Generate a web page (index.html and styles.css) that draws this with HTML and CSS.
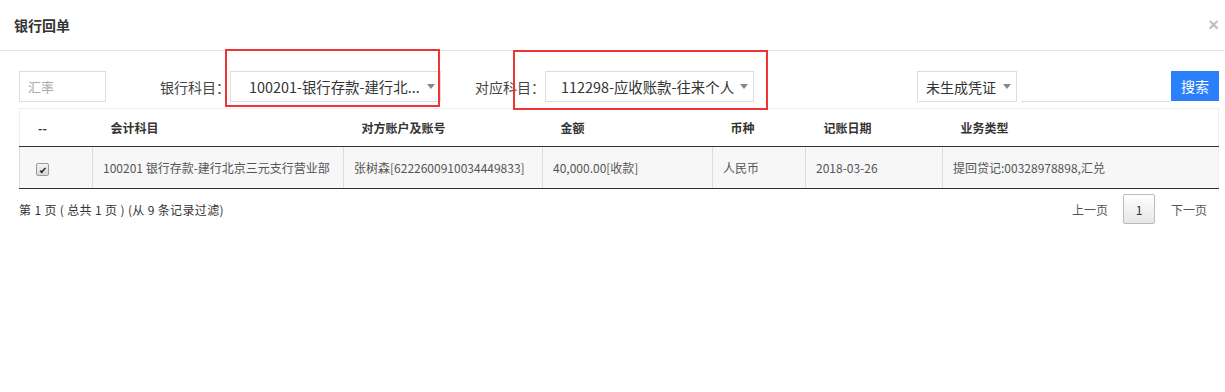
FILE: index.html
```html
<!DOCTYPE html>
<html lang="zh-CN">
<head>
  <meta charset="UTF-8" />
  <title>银行回单</title>
  <link rel="stylesheet" href="styles.css">
</head>
<body>
  <div class="modal">
    <div class="modal-header">
      <h4 class="modal-title">银行回单</h4>
      <span class="close">×</span>
    </div>
    <div class="modal-body">
      <div class="filter">
        <input class="rate" type="text" placeholder="汇率" />
        <label class="lbl lbl-bank">银行科目<span class="colon">：</span></label>
        <div class="sel sel-bank">
          <span class="sel-text">100201-银行存款-建行北...</span>
          <span class="caret"></span>
          <div class="mark mark-bank"></div>
        </div>
        <label class="lbl lbl-opp">对应科目<span class="colon">：</span></label>
        <div class="sel sel-opp">
          <span class="sel-text">112298-应收账款-往来个人</span>
          <span class="caret"></span>
          <div class="mark mark-opp"></div>
        </div>
        <div class="sel sel-status">
          <span class="sel-text">未生成凭证</span>
          <span class="caret"></span>
        </div>
        <input class="keyword" type="text" />
        <button class="btn-search">搜索</button>
      </div>

      <table class="grid">
        <colgroup>
          <col style="width:73px"><col style="width:251px"><col style="width:199px"><col style="width:170px">
          <col style="width:93px"><col style="width:137px"><col style="width:276px">
        </colgroup>
        <thead>
          <tr>
            <th class="c-check">--</th>
            <th>会计科目</th>
            <th>对方账户及账号</th>
            <th>金额</th>
            <th>币种</th>
            <th>记账日期</th>
            <th>业务类型</th>
          </tr>
        </thead>
        <tbody>
          <tr>
            <td class="c-check"><span class="chk">✔</span></td>
            <td>100201 银行存款-建行北京三元支行营业部</td>
            <td>张树森[6222600910034449833]</td>
            <td>40,000.00[收款]</td>
            <td>人民币</td>
            <td>2018-03-26</td>
            <td>提回贷记:00328978898,汇兑</td>
          </tr>
        </tbody>
      </table>

      <div class="footer">
        <div class="info">第 1 页 ( 总共 1 页 ) (从 9 条记录过滤)</div>
        <div class="pager">
          <span class="pg-link">上一页</span>
          <span class="pg-cur">1</span>
          <span class="pg-link">下一页</span>
        </div>
      </div>
    </div>
  </div>
</body>
</html>
```

FILE: styles.css
```css
body {
  margin: 0;
  background: #fff;
  color: #333;
  font-family: "Noto Sans CJK SC", "Liberation Sans", sans-serif;
  font-size: 12px;
}
.modal-header {
  height: 50px;
  border-bottom: 1px solid #e5e5e5;
  display: flex;
  align-items: center;
  justify-content: space-between;
  padding: 0 5px 0 14px;
}
.modal-title {
  margin: 0;
  font-size: 14px;
  font-weight: bold;
  color: #333;
}
.close {
  color: #c0c0c0;
  font-family: "Liberation Sans", sans-serif;
  font-size: 19px;
  font-weight: bold;
  line-height: 1;
  padding-right: 1px;
  margin-top: -2px;
}
.modal-body {
  padding: 20px 6px 0 19px;
}
.filter {
  display: flex;
  align-items: center;
  height: 31px;
}
.rate {
  box-sizing: border-box;
  width: 87px;
  height: 31px;
  border: 1px solid #ddd;
  padding: 0 8px;
  font-family: inherit;
  font-size: 13px;
  outline: none;
}
.rate::placeholder {
  color: #aaa;
}
.lbl {
  font-size: 14px;
  color: #444;
  width: 70px;
  white-space: nowrap;
}
.colon {
  font-family: "Noto Sans CJK JP", sans-serif;
}
.lbl-bank {
  margin-left: 54px;
}
.lbl-opp {
  margin-left: 34px;
}
.sel {
  position: relative;
  box-sizing: border-box;
  height: 31px;
  border: 1px solid #ddd;
  display: flex;
  align-items: center;
  white-space: nowrap;
  color: #333;
}
.sel-bank {
  width: 211px;
  padding-left: 18px;
  font-size: 14.4px;
}
.sel-opp {
  width: 209px;
  padding-left: 15px;
  font-size: 14.4px;
}
.sel-status {
  width: 100px;
  margin-left: auto;
  padding-left: 8px;
  font-size: 14px;
}
.caret {
  margin-left: auto;
  margin-right: 5px;
  width: 0;
  height: 0;
  border-left: 4.5px solid transparent;
  border-right: 4.5px solid transparent;
  border-top: 5px solid #888;
}
.mark {
  position: absolute;
  border: 2px solid #ee3535;
}
.mark-bank {
  left: -6px;
  top: -23px;
  width: 211px;
  height: 54px;
}
.mark-opp {
  left: -33px;
  top: -22px;
  width: 251px;
  height: 56px;
}
.keyword {
  box-sizing: border-box;
  width: 150px;
  height: 31px;
  margin-left: 4px;
  border: none;
  border-bottom: 1px solid #ddd;
  outline: none;
}
.btn-search {
  width: 48px;
  height: 30px;
  border: none;
  background: #2a7ffb;
  color: #fff;
  font-family: inherit;
  font-size: 14px;
  padding: 0;
  align-self: flex-start;
}
.grid {
  margin-top: 6px;
  width: 1199px;
  border-collapse: collapse;
  table-layout: fixed;
  border: 1px solid #eee;
  border-bottom: none;
}
.grid th {
  height: 37px;
  text-align: left;
  padding: 0 0 0 18px;
  font-weight: bold;
  font-size: 12px;
  color: #333;
  border-bottom: 1px solid #2b343a;
}
.grid td {
  height: 41px;
  padding: 0 0 0 10px;
  background: #f7f7f7;
  color: #555;
  border-left: 1px solid #ddd;
  border-bottom: 1px solid #2b343a;
  white-space: nowrap;
  overflow: hidden;
}
.grid th.c-check {
  padding-left: 18px;
}
.grid td.c-check {
  padding-left: 16px;
}
.chk {
  display: inline-block;
  box-sizing: border-box;
  width: 13px;
  height: 13px;
  border: 1px solid #9a9a9a;
  border-radius: 2px;
  background: linear-gradient(#f4f4f4, #d8d8d8);
  font-size: 10px;
  line-height: 11px;
  text-align: center;
  color: #222;
  vertical-align: middle;
}
.footer {
  display: flex;
  align-items: center;
  justify-content: space-between;
  height: 34px;
  margin-top: 3px;
}
.info {
  font-size: 12px;
  letter-spacing: 0.35px;
  color: #333;
}
.pager {
  display: flex;
  align-items: center;
  padding-right: 12px;
}
.pg-link {
  color: #555;
  font-size: 12px;
}
.pg-cur {
  box-sizing: border-box;
  width: 32px;
  height: 30px;
  margin: 0 16px 0 15px;
  border: 1px solid #bbb;
  border-radius: 2px;
  background: linear-gradient(#fff, #e6e6e6);
  display: flex;
  align-items: center;
  justify-content: center;
  font-size: 12px;
  color: #333;
}
```
